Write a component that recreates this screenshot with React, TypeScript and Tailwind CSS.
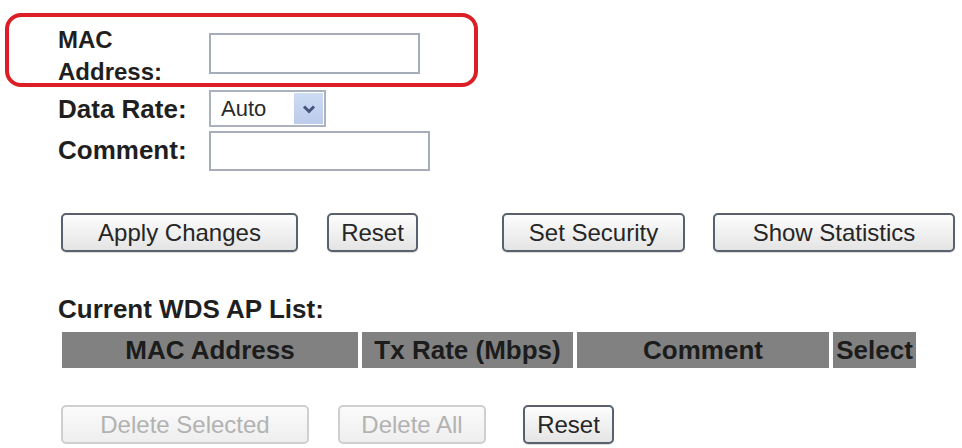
import { ReactNode } from 'react';

// Legacy router page: WDS settings form with the AP list header
function FormButton({
  children,
  width,
  disabled = false,
  className = '',
}: {
  children: ReactNode;
  width: string;
  disabled?: boolean;
  className?: string;
}) {
  return (
    <button
      type="button"
      disabled={disabled}
      className={
        disabled
          ? `${width} ${className} h-[39px] rounded-[5px] border-2 border-[#cfcfcf] bg-gradient-to-b from-[#fbfbfb] to-[#eeeeee] text-[24px] leading-none text-[#b2b2b2]`
          : `${width} ${className} h-[39px] rounded-[5px] border-2 border-[#58616d] bg-gradient-to-b from-[#fdfdfd] to-[#e4e4e4] text-[24px] leading-none text-[#262626] shadow-[0_1px_1px_rgba(0,0,0,0.15)]`
      }
    >
      {children}
    </button>
  );
}

function HeaderCell({ children, width }: { children: ReactNode; width: string }) {
  return (
    <div
      className={`${width} flex h-[36px] items-center justify-center bg-[#818181] text-[26px] font-bold text-[#1c1c1c]`}
    >
      {children}
    </div>
  );
}

export default function App() {
  return (
    <div
      className="relative h-[448px] w-[962px] overflow-hidden bg-white pl-[58px] pt-[24px] text-[#1f1f1f]"
      style={{ fontFamily: '"Liberation Sans", Arial, sans-serif' }}
    >
      {/* MAC Address */}
      <div className="flex">
        <div className="w-[151px] text-[24px] font-bold leading-[32px]">
          MAC
          <br />
          Address:
        </div>
        <input
          type="text"
          className="mt-[9px] h-[41px] w-[211px] border-2 border-[#a4adb9] bg-white outline-none"
        />
      </div>

      {/* Data Rate */}
      <div className="flex h-[39px]">
        <div className="w-[151px] pt-[5px] text-[26px] font-bold leading-[32px]">Data Rate:</div>
        <div className="mt-[2px] flex h-[37px] w-[117px] border-2 border-[#a9b2be] bg-white p-[1px]">
          <span className="flex flex-1 items-center pl-[9px] text-[22px] text-[#2a2a2a]">Auto</span>
          <span className="flex w-[29px] items-center justify-center bg-gradient-to-b from-[#cddbf3] to-[#bccbea]">
            <svg width="14" height="10" viewBox="0 0 14 10">
              <path d="M2 2.5 L7 7.5 L12 2.5" fill="none" stroke="#44557c" strokeWidth="3" />
            </svg>
          </span>
        </div>
      </div>

      {/* Comment */}
      <div className="flex h-[44px]">
        <div className="w-[151px] pt-[7px] text-[26px] font-bold leading-[32px]">Comment:</div>
        <input
          type="text"
          className="mt-[4px] h-[40px] w-[221px] border-2 border-[#a4adb9] bg-white outline-none"
        />
      </div>

      {/* Actions */}
      <div className="ml-[3px] mt-[42px] flex">
        <FormButton width="w-[237px]">Apply Changes</FormButton>
        <FormButton width="w-[91px]" className="ml-[29px]">
          Reset
        </FormButton>
        <FormButton width="w-[183px]" className="ml-[84px]">
          Set Security
        </FormButton>
        <FormButton width="w-[242px]" className="ml-[28px]">
          Show Statistics
        </FormButton>
      </div>

      <div className="mt-[41px] text-[26px] font-bold leading-[32px]">Current WDS AP List:</div>

      {/* AP list header */}
      <div className="ml-[4px] mt-[7px] flex gap-[4px]">
        <HeaderCell width="w-[296px]">MAC Address</HeaderCell>
        <HeaderCell width="w-[211px]">Tx Rate (Mbps)</HeaderCell>
        <HeaderCell width="w-[252px]">Comment</HeaderCell>
        <HeaderCell width="w-[83px]">Select</HeaderCell>
      </div>

      <div className="ml-[3px] mt-[37px] flex">
        <FormButton width="w-[248px]" disabled>
          Delete Selected
        </FormButton>
        <FormButton width="w-[148px]" className="ml-[29px]" disabled>
          Delete All
        </FormButton>
        <FormButton width="w-[91px]" className="ml-[37px]">
          Reset
        </FormButton>
      </div>

      {/* highlight ring around the MAC Address row */}
      <div className="pointer-events-none absolute left-[5px] top-[13px] h-[74px] w-[473px] rounded-[16px] border-[4px] border-[#dc1f27]" />
    </div>
  );
}
